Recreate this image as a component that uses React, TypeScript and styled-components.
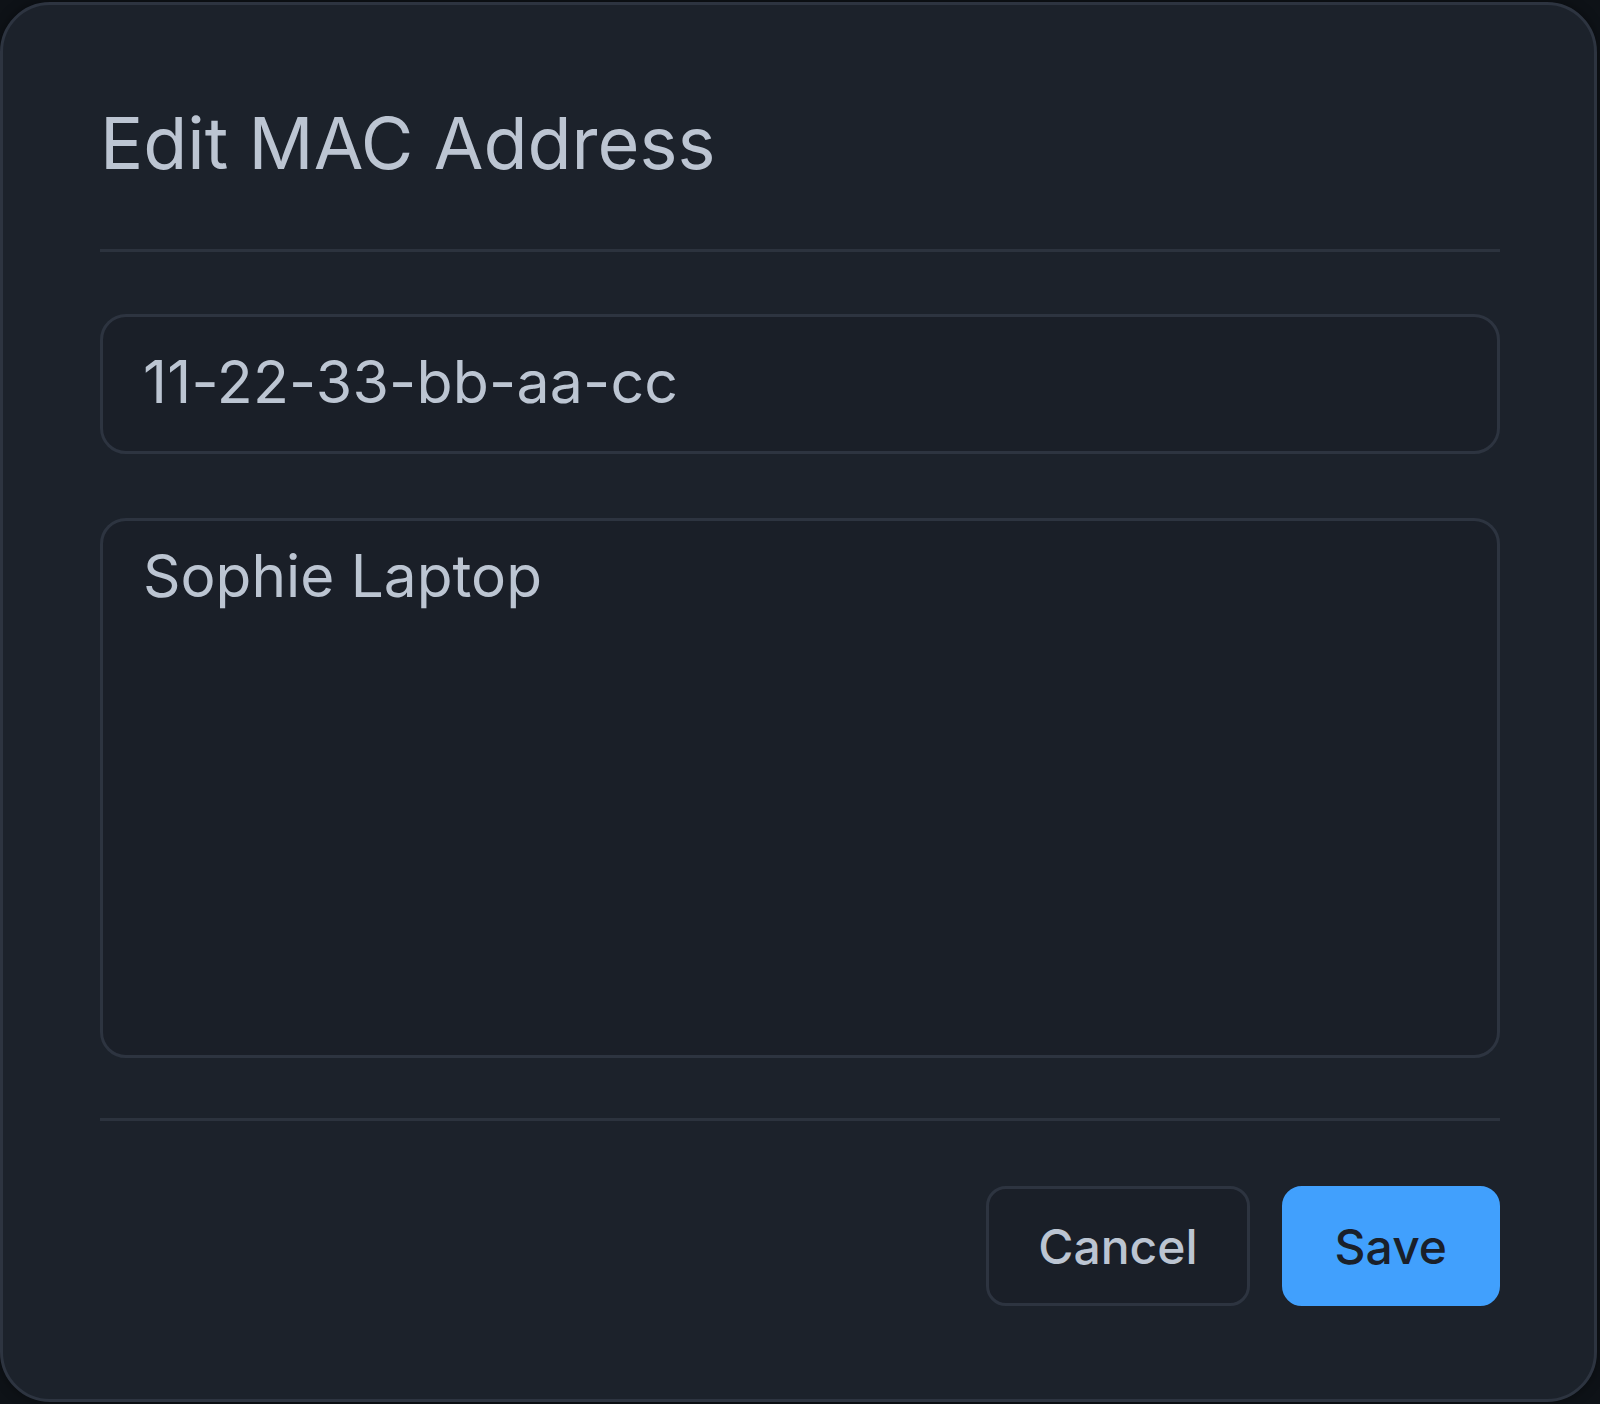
import React from "react";
import styled, { createGlobalStyle } from "styled-components";

const colors = {
  page: "#0e1217",
  modal: "#1c222b",
  field: "#1a1f28",
  line: "#2c333e",
  border: "#2d3440",
  text: "#bcc5d2",
  blue: "#41a0fd",
  dark: "#1a202a",
};

const GlobalStyle = createGlobalStyle`
  html, body {
    margin: 0;
    background-color: ${colors.page};
    font-family: Inter, "Noto Sans", "Liberation Sans", sans-serif;
  }
`;

const Page = styled.div`
  min-height: 1404px;
  padding-top: 2px;
  box-sizing: border-box;
`;

const Modal = styled.div`
  width: 1597px;
  height: 1400px;
  box-sizing: border-box;
  display: flex;
  flex-direction: column;
  padding: 95px 94px 0 97px;
  background-color: ${colors.modal};
  border: 3px solid ${colors.border};
  border-radius: 50px;
  box-shadow: 0 0 12px rgba(0, 0, 0, 0.4);
`;

const Title = styled.h2`
  margin: 0;
  font-size: 72px;
  font-weight: 400;
  line-height: 86px;
  color: ${colors.text};
`;

const Divider = styled.div<{ top: number }>`
  height: 3px;
  margin-top: ${(p) => p.top}px;
  background-color: ${colors.line};
`;

const Body = styled.div`
  display: flex;
  flex-direction: column;
  gap: 64px;
  padding-top: 62px;
`;

const fieldStyles = `
  box-sizing: border-box;
  width: 100%;
  margin: 0;
  font-family: Inter, "Noto Sans", "Liberation Sans", sans-serif;
  font-weight: 400;
  color: ${colors.text};
  background-color: ${colors.field};
  border: 3px solid ${colors.border};
  border-radius: 26px;
  outline: none;
`;

const TextInput = styled.input`
  ${fieldStyles}
  height: 140px;
  padding: 29px 40px 35px;
  font-size: 59px;
  line-height: 70px;
  letter-spacing: 0.2px;
`;

const TextArea = styled.textarea`
  ${fieldStyles}
  display: block;
  height: 540px;
  padding: 20px 40px;
  font-size: 58.5px;
  line-height: 1.21;
  resize: none;
`;

const Footer = styled.div`
  display: flex;
  justify-content: flex-end;
  gap: 32px;
  padding-top: 65px;
`;

const Button = styled.button<{ primary?: boolean }>`
  box-sizing: border-box;
  height: 120px;
  padding: 0 ${(p) => (p.primary ? 50 : 49)}px;
  font-family: Inter, "Noto Sans", "Liberation Sans", sans-serif;
  font-size: 48px;
  font-weight: 500;
  border-radius: 20px;
  cursor: pointer;
  color: ${(p) => (p.primary ? colors.dark : colors.text)};
  background-color: ${(p) => (p.primary ? colors.blue : colors.field)};
  border: 3px solid ${(p) => (p.primary ? colors.blue : colors.border)};
`;

export default function App() {
  return (
    <>
      <GlobalStyle />
      <Page>
        <Modal>
          <Title>Edit MAC Address</Title>
          <Divider top={63} />
          <Body>
            <TextInput defaultValue="11-22-33-bb-aa-cc" />
            <TextArea defaultValue="Sophie Laptop" />
          </Body>
          <Divider top={60} />
          <Footer>
            <Button>Cancel</Button>
            <Button primary>Save</Button>
          </Footer>
        </Modal>
      </Page>
    </>
  );
}
